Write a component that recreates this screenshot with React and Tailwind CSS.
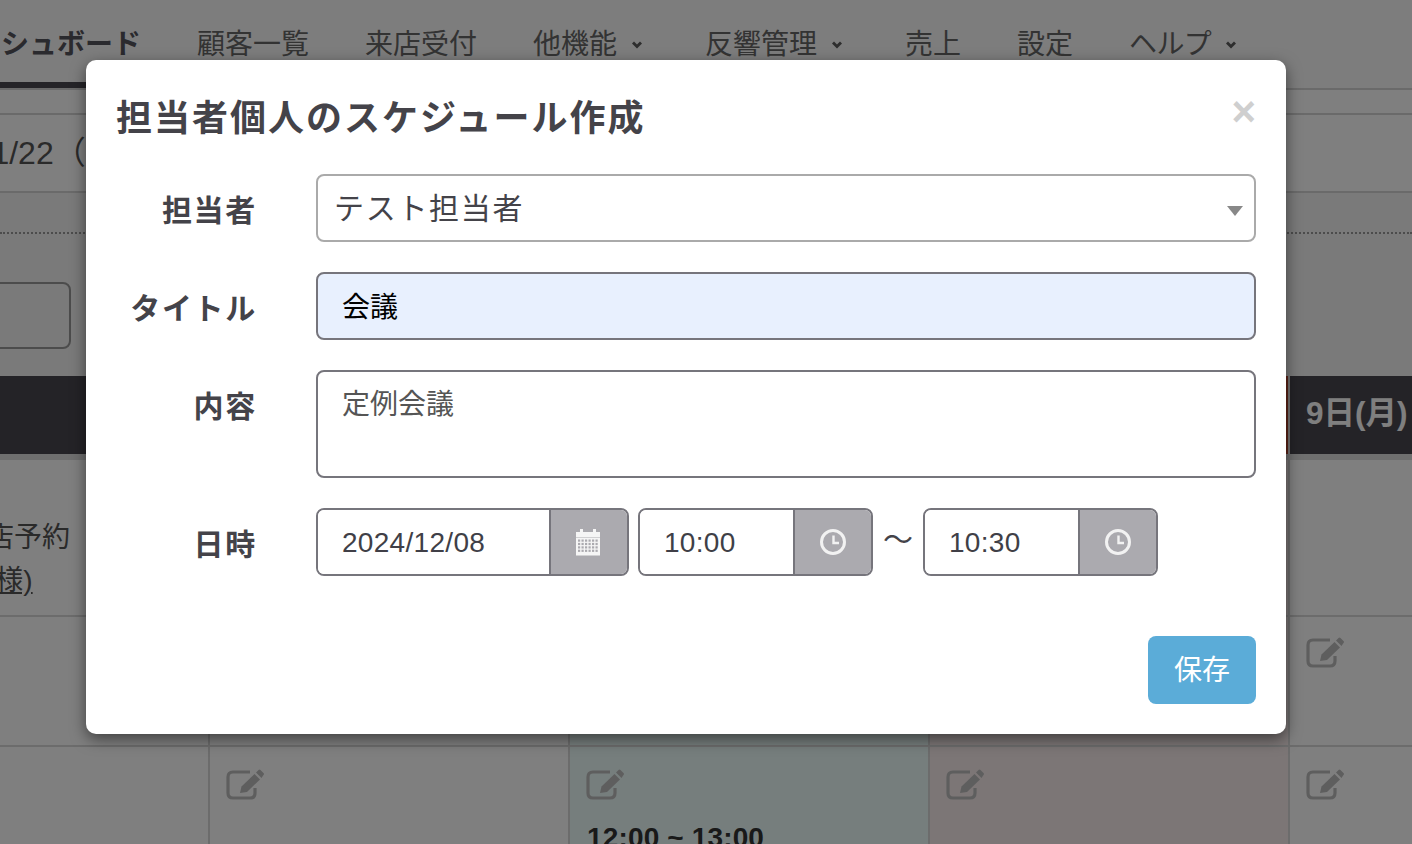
import React from "react";

const font = { fontFamily: '"Liberation Sans","Noto Sans CJK JP",sans-serif' };

function Chevron() {
  return (
    <span className="flex w-[32px] justify-end pr-[7px]">
      <svg width="10" height="8" viewBox="0 0 10 8" fill="none" stroke="#5a5a5a" strokeWidth="2.8">
        <path d="M1 1.5 L5 5.6 L9 1.5" />
      </svg>
    </span>
  );
}

function NavItem({ children, caret, className = "" }) {
  return (
    <div className={"flex shrink-0 items-center pt-[8px] pb-[6px] text-[28px] text-[#666] " + className}>
      {children}
      {caret && <Chevron />}
    </div>
  );
}

function EditIcon() {
  return (
    <svg className="block" width="38" height="31" viewBox="0 0 38 31" fill="none">
      <path d="M24 3 H7 Q2 3 2 8 V24 Q2 29 7 29 H24 Q29 29 29 24 V19" stroke="#bdbdbd" strokeWidth="3.2" />
      <path d="M14 24 L15.5 17.5 L28.5 5 L34 10.5 L21 23 Z" fill="#bdbdbd" />
      <path d="M30 3.5 L32.5 1 Q33.5 0 34.5 1 L37.5 4 Q38.5 5 37.5 6 L35.5 9 Z" fill="#bdbdbd" />
    </svg>
  );
}

function Cal() {
  const dots = [];
  for (let r = 0; r < 4; r++) for (let c = 0; c < 6; c++) dots.push(<rect key={r + "-" + c} x={3 + c * 3.5} y={11.5 + r * 3.4} width="2.2" height="2.2" fill="#abaaaf" />);
  return (
    <svg className="-ml-[2px]" width="26" height="28" viewBox="0 0 26 28">
      <path d="M1 4 H5 V1 H8 V4 H18 V1 H21 V4 H25 V9 H1 Z" fill="#f5f5f5" />
      <rect x="1" y="9.5" width="24" height="18" fill="#f5f5f5" />
      {dots}
    </svg>
  );
}

function Clock() {
  return (
    <svg width="28" height="28" viewBox="0 0 28 28" fill="none" stroke="#f2f2f2" strokeWidth="3">
      <circle cx="14" cy="14" r="11.5" />
      <path d="M14.5 7.5 V15 H20" strokeWidth="2.4" />
    </svg>
  );
}

function Addon({ value, width, addon, icon }) {
  return (
    <div className="flex h-[68px] overflow-hidden rounded-[8px] border-2 border-[#76757c]" style={{ width }}>
      <input readOnly value={value} className="min-w-0 flex-1 bg-white pt-[2px] pl-[24px] text-[28px] tracking-[0.3px] text-[#403f47] outline-none" />
      <div className="flex shrink-0 items-center justify-center border-l-2 border-[#76757c] bg-[#abaaaf]" style={{ width: addon }}>
        {icon}
      </div>
    </div>
  );
}

function Row({ label, children, className = "" }) {
  return (
    <div className={"flex " + className}>
      <label className="flex h-[68px] w-[141px] shrink-0 items-center justify-end pt-[4px] text-[30px] font-bold tracking-[1.7px] text-[#444349]">
        {label}
      </label>
      <div className="ml-[59px] min-w-0 flex-1">{children}</div>
    </div>
  );
}

function Cell({ className = "", children }) {
  return <div className={"shrink-0 border-r-2 border-[#d8d8d8] " + className}>{children}</div>;
}

export default function App() {
  return (
    <div className="relative h-[844px] w-full overflow-hidden bg-white" style={font}>
      {/* page behind the dialog */}
      <nav className="flex h-[88px] gap-[56px] bg-[#fafafa] pl-0">
        <div className="ml-[-55px] flex shrink-0 items-center border-b-[6px] border-[#4a4950] pt-[8px] text-[28px] font-bold text-[#55545c]">ダッシュボード</div>
        <NavItem>顧客一覧</NavItem>
        <NavItem>来店受付</NavItem>
        <NavItem caret>他機能</NavItem>
        <NavItem caret>反響管理</NavItem>
        <NavItem>売上</NavItem>
        <NavItem>設定</NavItem>
        <NavItem caret className="tracking-[-0.7px]">ヘルプ</NavItem>
      </nav>
      <div className="h-[27px] border-y-2 border-[#d4d4d4] bg-white" />
      <div className="flex h-[78px] items-center border-b-2 border-[#d4d4d4] bg-white pl-0">
        <span className="ml-[-24px] text-[32px] text-[#555]">11/22（金）</span>
      </div>
      <div className="h-[183px] bg-[#f4f4f4]">
        <div className="h-[41px] border-b-2 border-dotted border-[#999]" />
        <div className="mt-[48px] ml-[-60px] h-[67px] w-[131px] rounded-[8px] border-2 border-[#999]" />
      </div>
      <div className="flex h-[78px]">
        <Cell className="w-[210px] border-[#48464f] bg-[#48464f]" />
        <Cell className="w-[360px] border-[#48464f] bg-[#48464f]" />
        <Cell className="w-[360px] border-[#48464f] bg-[#48464f]" />
        <Cell className="w-[360px] border-[#e8e8e8] bg-[#b9472f]" />
        <div className="flex flex-1 items-center bg-[#48464f] pb-[2px] pl-[16px] text-[31.5px] font-bold text-white">9日(月)</div>
      </div>
      <div className="h-[6px] bg-[#dedede]" />
      <div className="flex h-[157px] border-b-2 border-[#d8d8d8]">
        <Cell className="w-[210px] pt-[56px] pl-0">
          <div className="ml-[-42px] text-[28px] leading-[43px] whitespace-nowrap text-[#555]">来店予約</div>
          <div className="ml-[-70px] text-[28px] leading-[43px] whitespace-nowrap text-[#555] underline">(田中様)</div>
        </Cell>
        <Cell className="w-[360px]" />
        <Cell className="w-[360px] bg-[#ecfcfa]" />
        <Cell className="w-[360px] bg-[#f8ecec]" />
      </div>
      <div className="flex h-[130px] border-b-2 border-[#d8d8d8]">
        <Cell className="w-[210px]" />
        <Cell className="w-[360px] pt-[20px] pl-[16px]"><EditIcon /></Cell>
        <Cell className="w-[360px] bg-[#ecfcfa] pt-[20px] pl-[16px]"><EditIcon /></Cell>
        <Cell className="w-[360px] bg-[#f8ecec] pt-[20px] pl-[16px]"><EditIcon /></Cell>
        <div className="pt-[20px] pl-[16px]"><EditIcon /></div>
      </div>
      <div className="flex h-[97px]">
        <Cell className="w-[210px]" />
        <Cell className="w-[360px] pt-[22px] pl-[16px]"><EditIcon /></Cell>
        <Cell className="w-[360px] bg-[#ecfcfa] pt-[22px] pl-[16px]">
          <EditIcon />
          <div className="mt-[22px] pl-px text-[28px] leading-[32px] font-bold tracking-[0.15px] text-[#333]">12:00 ~ 13:00</div>
        </Cell>
        <Cell className="w-[360px] bg-[#f8ecec] pt-[22px] pl-[16px]"><EditIcon /></Cell>
        <div className="pt-[22px] pl-[16px]"><EditIcon /></div>
      </div>

      {/* overlay and dialog */}
      <div className="absolute inset-0 flex items-start bg-black/50 pt-[60px] pl-[86px]">
        <div className="w-[1200px] rounded-[10px] bg-white p-[30px] shadow-[0_5px_15px_rgba(0,0,0,0.5)]">
          <div className="relative mb-[30px] flex h-[54px] items-center pt-[4px]">
            <h2 className="text-[36px] font-bold tracking-[2px] text-[#444349]">担当者個人のスケジュール作成</h2>
            <span className="absolute top-[1px] right-0 text-[42px] leading-[42px] font-bold text-[#cfcfcf]">×</span>
          </div>
          <div className="flex flex-col gap-[30px]">
            <Row label="担当者">
              <div className="relative">
                <select className="h-[68px] w-full appearance-none rounded-[8px] border-2 border-[#aaa] bg-white pl-[16px] text-[30px] tracking-[1.7px] text-[#444349] outline-none">
                  <option>テスト担当者</option>
                </select>
                <svg className="absolute top-[32px] right-[13px]" width="16" height="10" viewBox="0 0 16 10"><path d="M0 0 H16 L8 10 Z" fill="#888" /></svg>
              </div>
            </Row>
            <Row label="タイトル">
              <input readOnly value="会議" className="h-[68px] w-full rounded-[8px] border-2 border-[#76757c] bg-[#e8f0fe] pb-[3px] pl-[24px] text-[28px] text-black outline-none" />
            </Row>
            <Row label="内容">
              <textarea readOnly value="定例会議" className="block h-[108px] w-full resize-none rounded-[8px] border-2 border-[#76757c] bg-white px-[24px] pt-[13px] text-[28px] leading-[40px] text-[#555] outline-none" />
            </Row>
            <Row label="日時">
              <div className="flex items-center">
                <Addon value="2024/12/08" width={313} addon={78} icon={<Cal />} />
                <div className="ml-[9px]"><Addon value="10:00" width={235} addon={78} icon={<Clock />} /></div>
                <span className="flex w-[50px] justify-center pb-[6px] text-[30px] text-[#444349]">〜</span>
                <Addon value="10:30" width={235} addon={78} icon={<Clock />} />
              </div>
            </Row>
          </div>
          <div className="mt-[60px] flex justify-end">
            <button className="h-[68px] w-[108px] rounded-[8px] bg-[#5bacd8] pt-[2px] text-[28px] text-white">保存</button>
          </div>
        </div>
      </div>
    </div>
  );
}
